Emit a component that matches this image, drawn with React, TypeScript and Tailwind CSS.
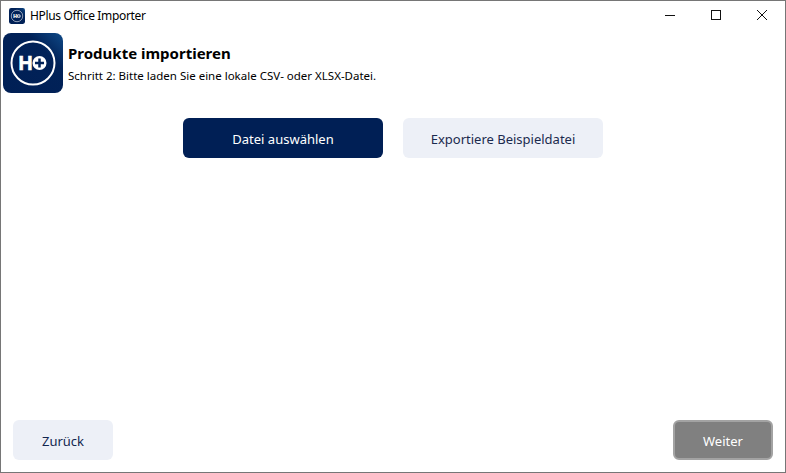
import { useId } from 'react'

const font = { sans: "font-['Noto_Sans','Open_Sans',sans-serif]" }

function Logo({ size, small }: { size: number; small?: boolean }) {
  const gradId = useId()
  return (
    <svg width={size} height={size} viewBox="0 0 60 60" className="shrink-0">
      <defs>
        <linearGradient id={gradId} x1="0" y1="1" x2="1" y2="0">
          <stop offset="0" stopColor="#001f55" />
          <stop offset="0.7" stopColor="#012258" />
          <stop offset="1" stopColor="#0f4a88" />
        </linearGradient>
      </defs>
      <rect width="60" height="60" rx="8" fill={`url(#${gradId})`} />
      <circle cx="30" cy="30" r="21.5" fill="none" stroke="#fff" strokeWidth={small ? 3 : 2} opacity={small ? 0.7 : 1} />
      <text x="22.5" y="37" textAnchor="middle" fontFamily="Liberation Sans" fontWeight="700" fontSize="19.5" fill="#fff" stroke="#fff" strokeWidth="0.6">
        H
      </text>
      <circle cx="36.5" cy="30" r="7" fill="#fff" />
      <path d="M36.5 25.5v9M32 30h9" stroke="#012258" strokeWidth="2.5" />
    </svg>
  )
}

export default function App() {
  return (
    <div className={`flex h-[473px] w-[786px] flex-col border border-[#767676] bg-white text-black ${font.sans}`}>
      <div className="flex h-[29px] shrink-0 items-center">
        <div className="ml-2 mt-[1px]">
          <Logo size={16} small />
        </div>
        <span className="ml-[5px] mt-[1px] text-[12px] tracking-[-0.35px]">HPlus Office Importer</span>
        <div className="ml-auto flex h-full items-center">
          <svg width="46" height="29" viewBox="0 0 46 29" fill="none" stroke="#111" strokeWidth="1">
            <path d="M18 14.5h10" />
          </svg>
          <svg width="46" height="29" viewBox="0 0 46 29" fill="none" stroke="#111" strokeWidth="1">
            <rect x="18.5" y="9.5" width="9" height="9" />
          </svg>
          <svg width="46" height="29" viewBox="0 0 46 29" fill="none" stroke="#111" strokeWidth="1">
            <path d="M18 9l10 10M28 9L18 19" />
          </svg>
        </div>
      </div>

      <div className="ml-[2px] mt-[3px] flex h-[60px] items-center gap-[5px]">
        <Logo size={60} />
        <div className="flex flex-col">
          <h1 className="text-[15px] font-bold leading-[20px]">Produkte importieren</h1>
          <p className="mt-[5px] text-[11.5px] leading-[16px]">Schritt 2: Bitte laden Sie eine lokale CSV- oder XLSX-Datei.</p>
        </div>
      </div>

      <div className="mt-[25px] flex justify-center gap-5">
        <button className="h-10 w-[200px] rounded-[6px] bg-[#001f55] pt-[3px] text-[13px] text-white">Datei auswählen</button>
        <button className="h-10 w-[200px] rounded-[6px] bg-[#edf0f7] pt-[3px] text-[13px] text-[#1b2a4e]">Exportiere Beispieldatei</button>
      </div>

      <div className="mb-3 mt-auto flex justify-between px-3">
        <button className="h-10 w-[100px] rounded-[6px] bg-[#edf0f7] pt-[3px] text-[13px] text-[#12264f]">Zurück</button>
        <button className="h-10 w-[100px] rounded-[6px] border-2 border-[#a3a3a3] bg-[#808080] pt-[3px] text-[13px] text-white">Weiter</button>
      </div>
    </div>
  )
}
